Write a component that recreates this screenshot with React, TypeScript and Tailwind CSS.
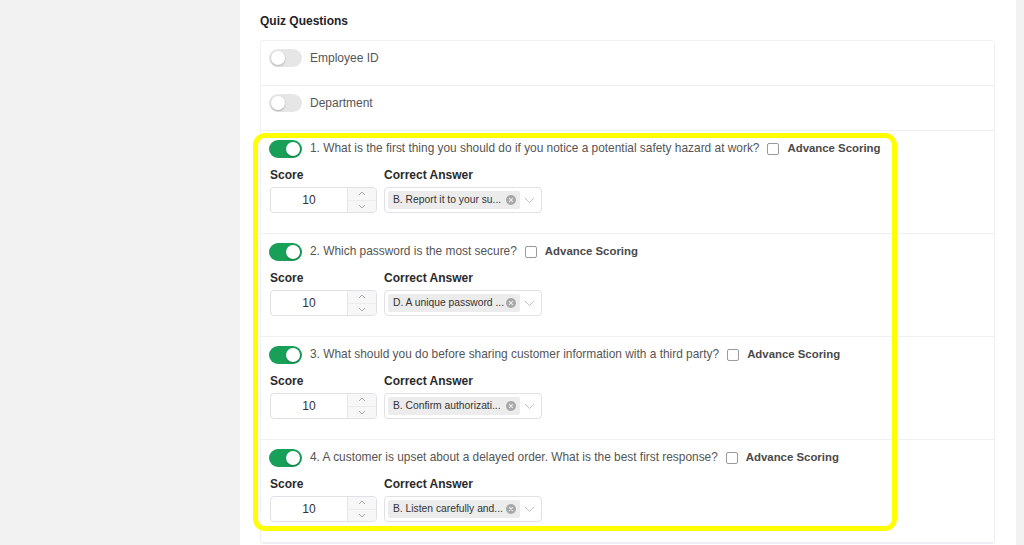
import React from "react";

const font = { fontFamily: '"Liberation Sans", Arial, sans-serif' };

function Toggle({ on }: { on: boolean }) {
  return (
    <div
      className={`relative h-[18px] w-[33px] shrink-0 rounded-full ${on ? "bg-[#18a058]" : "bg-[#e6e6e6]"}`}
    >
      <div
        className={`absolute top-[2px] h-[14px] w-[14px] rounded-full bg-white shadow-[0_1px_2px_rgba(0,0,0,0.25)] ${on ? "left-[17px]" : "left-[2px]"}`}
      />
    </div>
  );
}

function Question({ text, answer, last }: { text: string; answer: string; last?: boolean }) {
  return (
    <div className={`h-[103px] px-[8px] pt-[8px] ${last ? "" : "border-b border-[#efeff5]"}`}>
      <div className="flex h-[20px] items-center">
        <Toggle on />
        <span className="ml-[8px] text-[11.9px] text-[#555]">{text}</span>
        <span className="ml-[8px] h-[12px] w-[12px] rounded-[2px] border border-[#9a9a9a] bg-white" />
        <span className="ml-[8px] text-[11.4px] font-bold text-[#4a4a4a]">Advance Scoring</span>
      </div>
      <div className="mt-[8px] flex h-[16px] items-center text-[12px] font-bold text-[#2a2a2a]">
        <span className="ml-[1px] w-[114px]">Score</span>
        <span>Correct Answer</span>
      </div>
      <div className="mt-[4px] flex h-[26px] gap-[7px] pl-[1px]">
        <div className="flex h-[26px] w-[107px] overflow-hidden rounded-[4px] border border-[#e0e0e6] bg-white">
          <div className="flex flex-1 items-center justify-center text-[12px] text-[#333]">10</div>
          <div className="flex w-[29px] flex-col border-l border-[#e6e6e6] bg-[#f7f7f7]">
            <div className="flex flex-1 items-center justify-center border-b border-[#ececec]">
              <svg width="8" height="5" viewBox="0 0 8 5">
                <path d="M1 4 L4 1 L7 4" fill="none" stroke="#aaa" strokeWidth="1" />
              </svg>
            </div>
            <div className="flex flex-1 items-center justify-center">
              <svg width="8" height="5" viewBox="0 0 8 5">
                <path d="M1 1 L4 4 L7 1" fill="none" stroke="#aaa" strokeWidth="1" />
              </svg>
            </div>
          </div>
        </div>
        <div className="flex h-[26px] w-[158px] items-center rounded-[4px] border border-[#e0e0e6] bg-white pl-[3px]">
          <div className="flex h-[18px] w-[132px] items-center rounded-[2px] bg-[#ececec] pl-[5px] pr-[4px]">
            <span className="flex-1 overflow-hidden whitespace-nowrap text-[10.3px] text-[#333]">{answer}</span>
            <svg width="10" height="10" viewBox="0 0 10 10" className="shrink-0">
              <circle cx="5" cy="5" r="5" fill="#a8a8a8" />
              <path d="M3.2 3.2 L6.8 6.8 M6.8 3.2 L3.2 6.8" stroke="#ececec" strokeWidth="1.2" />
            </svg>
          </div>
          <svg width="11" height="7" viewBox="0 0 11 7" className="ml-[4px]">
            <path d="M1 1 L5.5 5.5 L10 1" fill="none" stroke="#c2c2c2" strokeWidth="1" />
          </svg>
        </div>
      </div>
    </div>
  );
}

export default function App() {
  return (
    <div className="flex h-[545px] w-[1024px] overflow-hidden bg-[#f2f2f2]" style={font}>
      <div className="w-[240px] shrink-0" />
      <div className="relative w-[776px] shrink-0 bg-white px-[20px] pt-[12px]">
        <div className="h-[18px] text-[12px] font-bold text-[#1f2328]">Quiz Questions</div>
        <div className="mt-[10px] w-[735px] rounded-[3px] border border-[#efeff5]">
          <div className="flex h-[45px] items-start border-b border-[#efeff5] px-[8px] pt-[8px]">
            <div className="flex h-[18px] items-center">
              <Toggle on={false} />
              <span className="ml-[8px] text-[12px] text-[#555]">Employee ID</span>
            </div>
          </div>
          <div className="flex h-[45px] items-start border-b border-[#efeff5] px-[8px] pt-[8px]">
            <div className="flex h-[18px] items-center">
              <Toggle on={false} />
              <span className="ml-[8px] text-[12px] text-[#555]">Department</span>
            </div>
          </div>
          <Question
            text="1. What is the first thing you should do if you notice a potential safety hazard at work?"
            answer="B. Report it to your su..."
          />
          <Question text="2. Which password is the most secure?" answer="D. A unique password ..." />
          <Question
            text="3. What should you do before sharing customer information with a third party?"
            answer="B. Confirm authorizati..."
          />
          <Question
            text="4. A customer is upset about a delayed order. What is the best first response?"
            answer="B. Listen carefully and..."
          />
        </div>
        <div className="pointer-events-none absolute left-[13px] top-[133px] h-[398px] w-[644px] rounded-[12px] border-[5px] border-[#ffff00]" />
      </div>
      <div className="flex-1 bg-[#f2f2f2]" />
    </div>
  );
}
